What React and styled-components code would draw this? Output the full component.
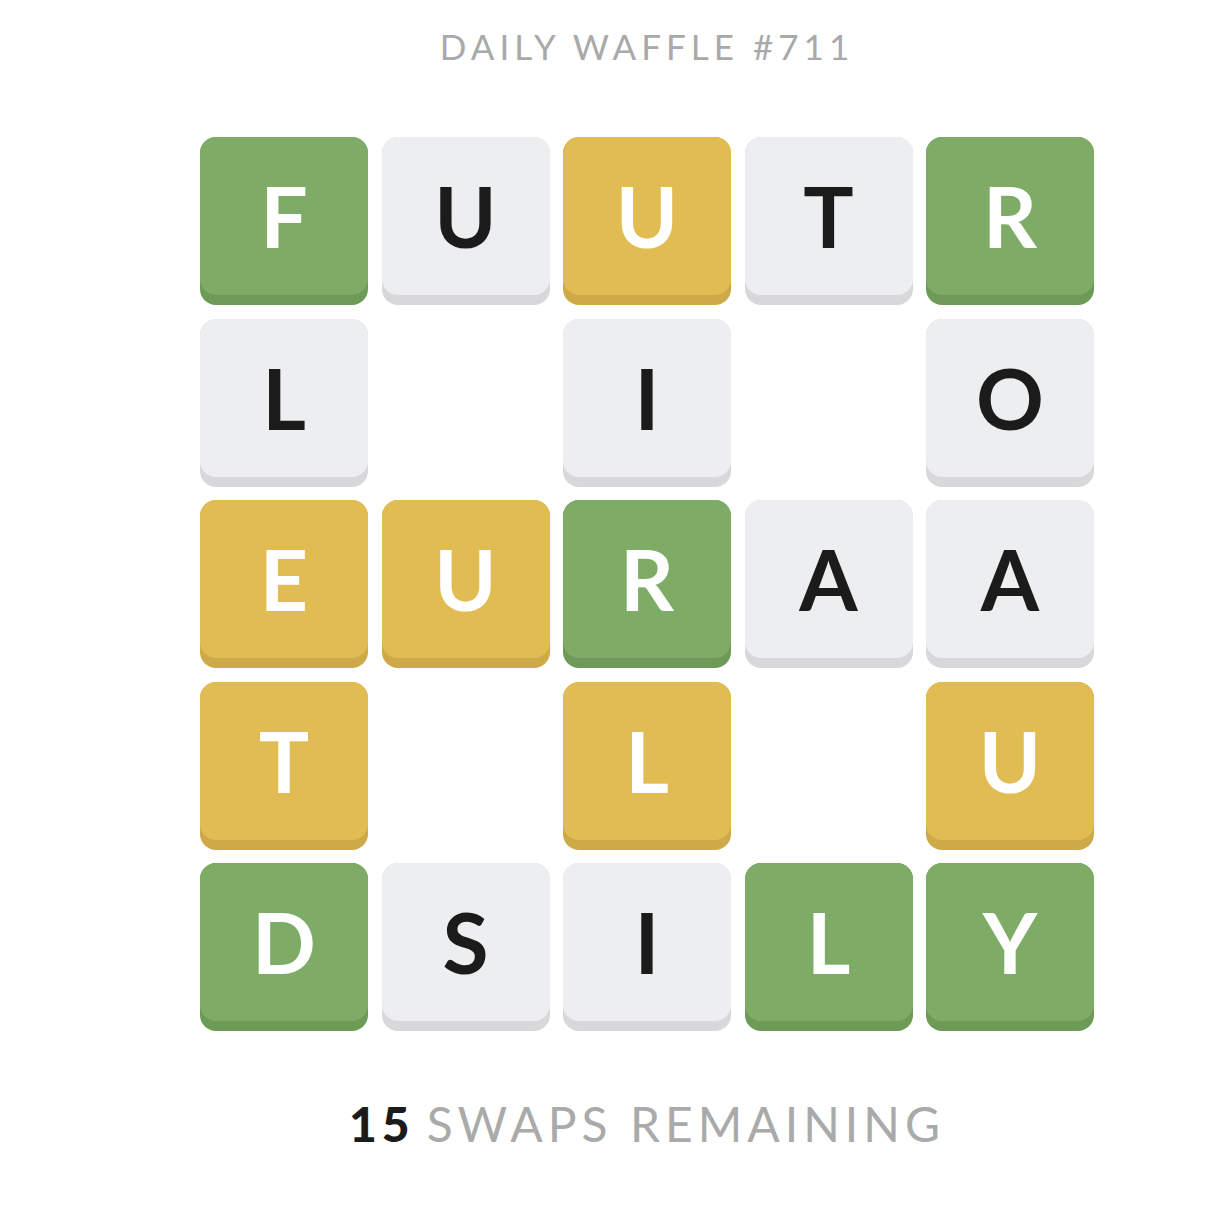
import React from 'react';
import styled, { createGlobalStyle } from 'styled-components';

const GlobalStyle = createGlobalStyle`
  body {
    margin: 0;
    background: #fff;
    font-family: Lato, "Noto Sans", sans-serif;
  }
`;

const COLORS = {
  green: { face: '#7eac66', edge: '#6d9a57', text: '#fff' },
  yellow: { face: '#e0bc53', edge: '#cda948', text: '#fff' },
  gray: { face: '#edeef0', edge: '#d8d8da', text: '#1b1b1b' },
};

const Page = styled.div`
  display: flex;
  flex-direction: column;
  align-items: center;
  padding: 26px 0 40px 84px;
`;

const Title = styled.h1`
  margin: 0;
  font-size: 35px;
  line-height: 40px;
  font-weight: 400;
  letter-spacing: 5px;
  color: #a9a9a9;
`;

const Board = styled.div`
  display: grid;
  grid-template-columns: repeat(5, 168px);
  grid-auto-rows: 168px;
  gap: 13.5px;
  margin-top: 71px;
`;

const Tile = styled.div`
  position: relative;
  border-radius: 16px;
  background: ${({ $c }) => COLORS[$c].edge};
  visibility: ${({ $empty }) => ($empty ? 'hidden' : 'visible')};
`;

const Face = styled.div`
  height: 158px;
  border-radius: 16px;
  background: ${({ $c }) => COLORS[$c].face};
  color: ${({ $c }) => COLORS[$c].text};
  display: flex;
  align-items: center;
  justify-content: center;
  font-size: 84px;
  font-weight: 700;
  line-height: 1;
`;

const Footer = styled.div`
  margin-top: 65px;
  font-size: 48px;
  line-height: 56px;
  letter-spacing: 5px;
  color: #aaaaaa;
`;

const Count = styled.span`
  color: #1b1b1b;
  font-weight: 900;
  margin-right: 12px;
`;

const board = [
  ['F', 'green'], ['U', 'gray'], ['U', 'yellow'], ['T', 'gray'], ['R', 'green'],
  ['L', 'gray'], null, ['I', 'gray'], null, ['O', 'gray'],
  ['E', 'yellow'], ['U', 'yellow'], ['R', 'green'], ['A', 'gray'], ['A', 'gray'],
  ['T', 'yellow'], null, ['L', 'yellow'], null, ['U', 'yellow'],
  ['D', 'green'], ['S', 'gray'], ['I', 'gray'], ['L', 'green'], ['Y', 'green'],
];

export default function App() {
  return (
    <>
      <GlobalStyle />
      <Page>
        <Title>DAILY WAFFLE #711</Title>
        <Board>
          {board.map((cell, i) =>
            cell ? (
              <Tile key={i} $c={cell[1]}>
                <Face $c={cell[1]}>{cell[0]}</Face>
              </Tile>
            ) : (
              <Tile key={i} $c="gray" $empty />
            )
          )}
        </Board>
        <Footer>
          <Count>15</Count>SWAPS REMAINING
        </Footer>
      </Page>
    </>
  );
}
